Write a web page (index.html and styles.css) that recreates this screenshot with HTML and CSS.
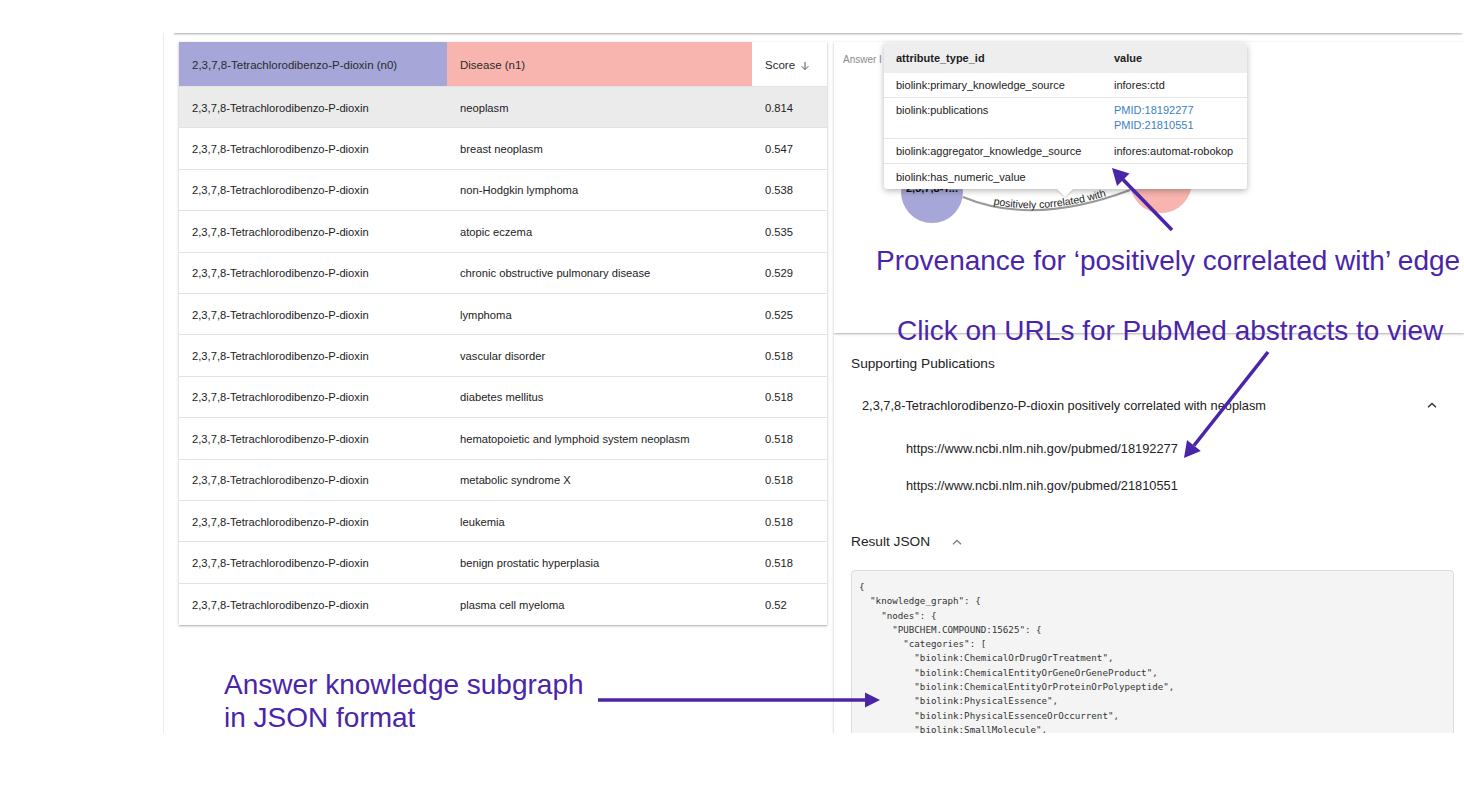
FILE: index.html
```html
<!DOCTYPE html>
<html>
<head>
<meta charset="utf-8">
<link rel="stylesheet" href="styles.css">
</head>
<body>
<div class="page">
  <div class="topbar"><div class="topbar-spacer"></div><div class="topbar-bar"></div></div>
  <div class="body-row">
    <aside class="sidebar"></aside>
    <main class="content">
      <section class="results-card">
        <div class="row head">
          <div class="cell c-n0">2,3,7,8-Tetrachlorodibenzo-P-dioxin (n0)</div>
          <div class="cell c-n1">Disease (n1)</div>
          <div class="cell c-score">Score <svg class="sort-ic" width="10" height="10" viewBox="0 0 10 10"><path d="M5 1v7.5M1.6 5.2L5 8.6l3.4-3.4" fill="none" stroke="#555" stroke-width="1"/></svg></div>
        </div>
        <div class="row selected"><div class="cell">2,3,7,8-Tetrachlorodibenzo-P-dioxin</div><div class="cell">neoplasm</div><div class="cell">0.814</div></div>
        <div class="row"><div class="cell">2,3,7,8-Tetrachlorodibenzo-P-dioxin</div><div class="cell">breast neoplasm</div><div class="cell">0.547</div></div>
        <div class="row"><div class="cell">2,3,7,8-Tetrachlorodibenzo-P-dioxin</div><div class="cell">non-Hodgkin lymphoma</div><div class="cell">0.538</div></div>
        <div class="row"><div class="cell">2,3,7,8-Tetrachlorodibenzo-P-dioxin</div><div class="cell">atopic eczema</div><div class="cell">0.535</div></div>
        <div class="row"><div class="cell">2,3,7,8-Tetrachlorodibenzo-P-dioxin</div><div class="cell">chronic obstructive pulmonary disease</div><div class="cell">0.529</div></div>
        <div class="row"><div class="cell">2,3,7,8-Tetrachlorodibenzo-P-dioxin</div><div class="cell">lymphoma</div><div class="cell">0.525</div></div>
        <div class="row"><div class="cell">2,3,7,8-Tetrachlorodibenzo-P-dioxin</div><div class="cell">vascular disorder</div><div class="cell">0.518</div></div>
        <div class="row"><div class="cell">2,3,7,8-Tetrachlorodibenzo-P-dioxin</div><div class="cell">diabetes mellitus</div><div class="cell">0.518</div></div>
        <div class="row"><div class="cell">2,3,7,8-Tetrachlorodibenzo-P-dioxin</div><div class="cell">hematopoietic and lymphoid system neoplasm</div><div class="cell">0.518</div></div>
        <div class="row"><div class="cell">2,3,7,8-Tetrachlorodibenzo-P-dioxin</div><div class="cell">metabolic syndrome X</div><div class="cell">0.518</div></div>
        <div class="row"><div class="cell">2,3,7,8-Tetrachlorodibenzo-P-dioxin</div><div class="cell">leukemia</div><div class="cell">0.518</div></div>
        <div class="row"><div class="cell">2,3,7,8-Tetrachlorodibenzo-P-dioxin</div><div class="cell">benign prostatic hyperplasia</div><div class="cell">0.518</div></div>
        <div class="row last"><div class="cell">2,3,7,8-Tetrachlorodibenzo-P-dioxin</div><div class="cell">plasma cell myeloma</div><div class="cell">0.52</div></div>
      </section>

      <div class="right-col">
        <section class="graph-card">
          <div class="graph-label">Answer I</div>
          <svg class="graph" width="630" height="291" viewBox="0 0 630 291">
            <defs>
              <path id="edgeText" d="M129,153 Q199.5,182.5 296,146"/>
            </defs>
            <path d="M129,155 Q199.5,184.5 296,148" fill="none" stroke="#999" stroke-width="2"/>
            <circle cx="98" cy="150" r="31" fill="#a6a6d8"/>
            <circle cx="327" cy="140" r="31" fill="#f8b4ae"/>
            <text class="node-text" x="98" y="150" text-anchor="middle">2,3,7,8-T...</text>
            <text class="edge-text"><textPath href="#edgeText" startOffset="52%" text-anchor="middle">positively correlated with</textPath></text>
          </svg>
          <div class="popup">
            <div class="p-row p-head"><div class="p-k">attribute_type_id</div><div class="p-v">value</div></div>
            <div class="p-row"><div class="p-k">biolink:primary_knowledge_source</div><div class="p-v">infores:ctd</div></div>
            <div class="p-row p-tall"><div class="p-k">biolink:publications</div><div class="p-v"><a class="pmid">PMID:18192277</a><a class="pmid">PMID:21810551</a></div></div>
            <div class="p-row"><div class="p-k">biolink:aggregator_knowledge_source</div><div class="p-v">infores:automat-robokop</div></div>
            <div class="p-row p-last"><div class="p-k">biolink:has_numeric_value</div><div class="p-v"></div></div>
            <div class="tail"></div>
          </div>
        </section>

        <section class="detail-card">
          <div class="sec-title">Supporting Publications</div>
          <div class="acc-row">
            <span>2,3,7,8-Tetrachlorodibenzo-P-dioxin positively correlated with neoplasm</span>
            <svg width="10" height="6" viewBox="0 0 10 6"><path d="M1 5.2L5 1.4l4 3.8" fill="none" stroke="#333" stroke-width="1.4"/></svg>
          </div>
          <div class="urls">
            <a class="url">https://www.ncbi.nlm.nih.gov/pubmed/18192277</a>
            <a class="url">https://www.ncbi.nlm.nih.gov/pubmed/21810551</a>
          </div>
          <div class="sec-title json-title">Result JSON
            <svg width="10" height="6" viewBox="0 0 10 6"><path d="M1 5.2L5 1.4l4 3.8" fill="none" stroke="#777" stroke-width="1.2"/></svg>
          </div>
          <pre class="json">{
  "knowledge_graph": {
    "nodes": {
      "PUBCHEM.COMPOUND:15625": {
        "categories": [
          "biolink:ChemicalOrDrugOrTreatment",
          "biolink:ChemicalEntityOrGeneOrGeneProduct",
          "biolink:ChemicalEntityOrProteinOrPolypeptide",
          "biolink:PhysicalEssence",
          "biolink:PhysicalEssenceOrOccurrent",
          "biolink:SmallMolecule",</pre>
        </section>
      </div>
    </main>
  </div>
</div>

<div class="note note-prov">Provenance for ‘positively correlated with’ edge</div>
<div class="note note-click">Click on URLs for PubMed abstracts to view</div>
<div class="note note-json">Answer knowledge subgraph<br>in JSON format</div>
<svg class="arrows" width="1464" height="796" viewBox="0 0 1464 796">
  <g stroke="#4a25aa" stroke-width="3.6" fill="none">
    <line x1="1172" y1="230" x2="1123" y2="179.5"/>
    <line x1="1268" y1="352" x2="1194" y2="445.5"/>
    <line x1="598" y1="700" x2="867" y2="700"/>
  </g>
  <g fill="#4a25aa">
    <polygon points="1112,168 1129.5,173.5 1117,186"/>
    <polygon points="1184,458 1200.8,451 1187,440"/>
    <polygon points="880,700 865,692.5 865,707.5"/>
  </g>
</svg>
</body>
</html>
```

FILE: styles.css
```css
* { box-sizing: border-box; }
html, body { margin: 0; padding: 0; }
body {
  width: 1464px;
  height: 796px;
  overflow: hidden;
  background: #fff;
  font-family: "Liberation Sans", Arial, sans-serif;
  color: #222;
  position: relative;
}
.page {
  height: 733px;
  overflow: hidden;
  display: flex;
  flex-direction: column;
}
.topbar {
  height: 33px;
  display: flex;
  flex: none;
  position: relative;
  z-index: 2;
}
.topbar-spacer { width: 172px; flex: none; }
.topbar-bar {
  flex: 1;
  background: #fff;
  box-shadow: 0 3px 2px -2px rgba(0,0,0,0.35);
}
.body-row {
  flex: 1;
  display: flex;
  min-height: 0;
}
.sidebar {
  width: 164px;
  flex: none;
  border-right: 1px solid #ebebeb;
}
.content {
  flex: 1;
  display: flex;
  gap: 7px;
  padding: 9px 0 0 15px;
  min-width: 0;
}
.results-card {
  width: 648px;
  flex: none;
  align-self: flex-start;
  background: #fff;
  box-shadow: 0 1px 3px rgba(0,0,0,0.22), 0 1px 1px rgba(0,0,0,0.12);
  font-size: 11.2px;
}
.row {
  display: grid;
  grid-template-columns: 268px 305px 75px;
  height: 41.4px;
  align-items: center;
  border-bottom: 1px solid #e2e2e2;
  padding-top: 1px;
}
.row.last { border-bottom: none; }
.row.head { height: 45px; font-size: 11.5px; color: #2a2a2a; padding-top: 0; }
.row.head .cell { height: 100%; display: flex; align-items: center; padding-top: 1px; }
.row.selected { background: #ebebec; }
.cell { padding-left: 13px; white-space: nowrap; }
.c-n0 { background: #a6a6d8; }
.c-n1 { background: #f8b4ae; }
.c-score { background: #fff; }
.sort-ic { margin-left: 5px; margin-top: 2px; }

.right-col {
  width: 630px;
  flex: none;
  display: flex;
  flex-direction: column;
}
.graph-card {
  height: 291px;
  flex: none;
  position: relative;
  background: #fff;
  box-shadow: 0 1px 3px rgba(0,0,0,0.22), 0 1px 1px rgba(0,0,0,0.1);
}
.graph-label {
  position: absolute;
  left: 9px;
  top: 12px;
  white-space: nowrap;
  font-size: 10px;
  color: #8a8a8a;
}
.graph { position: absolute; left: 0; top: 0; }
.node-text { font-size: 11px; font-weight: bold; fill: #111; font-family: "Liberation Sans", Arial, sans-serif; }
.edge-text { font-size: 10.5px; fill: #222; font-family: "Liberation Sans", Arial, sans-serif; }

.popup {
  position: absolute;
  left: 50px;
  top: 1px;
  width: 363px;
  background: #fff;
  border-radius: 3px;
  box-shadow: 0 2px 6px rgba(0,0,0,0.28);
  font-size: 11px;
  color: #222;
  z-index: 3;
}
.p-row {
  display: flex;
  height: 25px;
  align-items: center;
  border-bottom: 1px solid #e4e4e4;
}
.p-head { height: 30px; background: #eeeeee; font-weight: bold; border-bottom: none; border-radius: 3px 3px 0 0; }
.p-tall { height: 41px; align-items: flex-start; padding-top: 5px; line-height: 15px; }
.p-last { border-bottom: none; }
.p-k { width: 230px; padding-left: 12px; flex: none; white-space: nowrap; }
.p-v { white-space: nowrap; display: flex; flex-direction: column; }
.pmid { color: #3b7fc4; }
.tail {
  position: absolute;
  left: 173px;
  bottom: -8px;
  width: 0;
  height: 0;
  border-left: 8px solid transparent;
  border-right: 8px solid transparent;
  border-top: 8px solid #fff;
  filter: drop-shadow(0 1px 1px rgba(0,0,0,0.18));
}

.detail-card {
  flex: 1;
  background: #fff;
  box-shadow: 0 1px 3px rgba(0,0,0,0.22), 0 1px 1px rgba(0,0,0,0.1);
  padding: 0 10px 0 17px;
  overflow: hidden;
}
.sec-title {
  font-size: 13.7px;
  line-height: 20px;
  margin-top: 21px;
  color: #222;
  display: flex;
  align-items: center;
}
.acc-row {
  margin-top: 21px;
  padding: 0 17px 0 11px;
  height: 20px;
  display: flex;
  align-items: center;
  justify-content: space-between;
  font-size: 12.8px;
}
.urls {
  margin-top: 24px;
  padding-left: 55px;
  display: flex;
  flex-direction: column;
  gap: 17px;
  font-size: 12.8px;
}
.url { line-height: 20px; color: #222; }
.json-title { margin-top: 36px; }
.json-title svg { margin-left: 22px; }
.json {
  margin: 18px 0 0 0;
  background: #f4f4f4;
  border: 1px solid #dcdcdc;
  border-radius: 4px;
  padding: 9px 7px;
  font-family: "DejaVu Sans Mono", "Liberation Mono", monospace;
  font-size: 9.2px;
  line-height: 14.3px;
  color: #333;
}

.note {
  position: absolute;
  font-size: 28px;
  line-height: 32px;
  color: #4a25aa;
  white-space: nowrap;
  z-index: 10;
}
.note-prov { left: 876px; top: 245px; }
.note-click { left: 897px; top: 315px; }
.note-json { left: 224px; top: 668px; line-height: 33px; }
.arrows {
  position: absolute;
  left: 0;
  top: 0;
  pointer-events: none;
  z-index: 11;
}
```
